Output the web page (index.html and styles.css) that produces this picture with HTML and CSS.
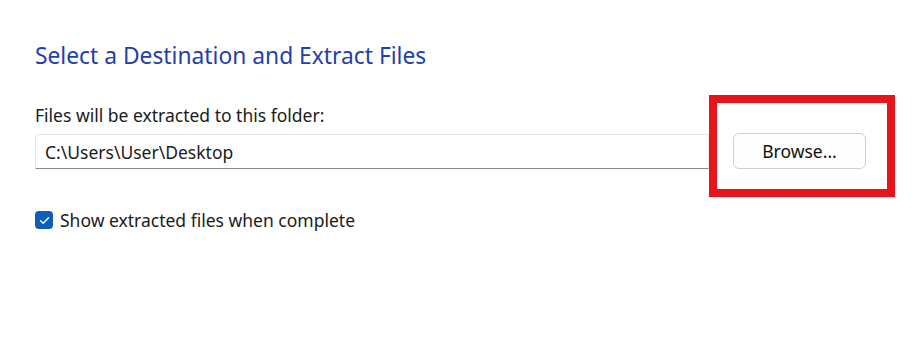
FILE: index.html
```html
<!DOCTYPE html>
<html lang="en">
<head>
  <meta charset="UTF-8" />
  <meta name="viewport" content="width=device-width, initial-scale=1.0"/>
  <title>Extract Compressed Folders</title>
  <link rel="stylesheet" href="styles.css">
</head>
<body>
  <div class="wizard">
    <h1 class="title">Select a Destination and Extract Files</h1>
    <div class="dest-row">
      <div class="dest-field">
        <label for="path" class="field-label">Files will be extracted to this folder:</label>
        <input type="text" id="path" class="path-input" value="C:\Users\User\Desktop" />
      </div>
      <div class="highlight">
        <button class="browse">Browse...</button>
      </div>
    </div>
    <label class="check">
      <span class="check-box">
        <svg width="11" height="9" viewBox="0 0 11 9"><path d="M1.5 4.8 L4.2 7.3 L9.5 1.8" fill="none" stroke="#fff" stroke-width="1.4" stroke-linecap="round" stroke-linejoin="round"/></svg>
      </span>
      Show extracted files when complete
    </label>
  </div>
</body>
</html>
```

FILE: styles.css
```css
body {
  margin: 0;
  background: #ffffff;
  font-family: "Noto Sans", "Open Sans", sans-serif;
  color: #1b1b1b;
}
.wizard {
  padding: 41px 19px 0 35px;
}
.title {
  margin: 0 0 24px;
  font-size: 22.8px;
  font-weight: 400;
  line-height: 30px;
  color: #1f40a8;
}
.dest-row {
  display: flex;
}
.dest-field {
  flex: 1;
  display: flex;
  flex-direction: column;
  justify-content: flex-end;
  padding-bottom: 28px;
}
.field-label {
  font-size: 17.5px;
  line-height: 22px;
  margin-bottom: 8px;
}
.path-input {
  height: 35px;
  box-sizing: border-box;
  padding: 0 9px;
  border: 1px solid #e6e6e6;
  border-bottom: 1px solid #8a8a8a;
  border-radius: 4px 0 0 0;
  font-family: inherit;
  font-size: 17.5px;
  color: #1b1b1b;
  background: #fff;
  outline: none;
}
.highlight {
  width: 186px;
  height: 102px;
  box-sizing: border-box;
  border: 8px solid #e8141b;
  padding: 30px 21px 20px 16px;
}
.browse {
  width: 133px;
  height: 36px;
  border: 1px solid #d0d0d0;
  border-radius: 6px;
  background: #fdfdfd;
  font-family: inherit;
  font-size: 17.5px;
  color: #111;
}
.check {
  display: flex;
  align-items: center;
  gap: 7px;
  margin-top: 12px;
  font-size: 17.5px;
  line-height: 22px;
}
.check-box {
  width: 18px;
  height: 18px;
  border-radius: 4px;
  background: #0f5fba;
  display: flex;
  align-items: center;
  justify-content: center;
}
```
